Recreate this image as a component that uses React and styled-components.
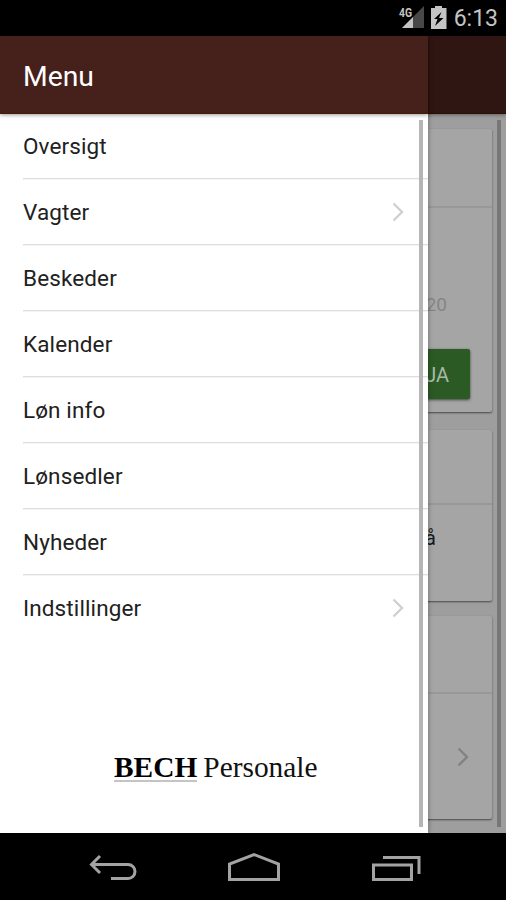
import React from 'react';
import styled, { createGlobalStyle } from 'styled-components';

const GlobalStyle = createGlobalStyle`
  * {
    box-sizing: border-box;
  }

  body {
    margin: 0;
    background: #000;
    font-family: Roboto, sans-serif;
  }
`;

const Phone = styled.div`
  display: flex;
  flex-direction: column;
  width: 506px;
  height: 900px;
  overflow: hidden;
`;

const StatusBar = styled.div`
  display: flex;
  flex: 0 0 36px;
  align-items: center;
  justify-content: flex-end;
  padding-right: 8px;
  background: #000;
  color: #c4c4c4;
`;

const StatusIcons = styled.svg`
  width: 52px;
  height: 36px;
  margin-right: 6px;
`;

const Clock = styled.span`
  height: 36px;
  padding-top: 2px;
  font-size: 23px;
  line-height: 34px;
`;

const Body = styled.div`
  position: relative;
  flex: 1;
  display: flex;
  min-height: 0;
  background: #9e9e9e;
`;

const Page = styled.div`
  flex: 1;
  display: flex;
  flex-direction: column;
`;

const AppBar = styled.header`
  flex: 0 0 78px;
  display: flex;
  align-items: center;
  padding: 5px 23px 0;
  background: ${(props) => (props.$dimmed ? '#301613' : '#46211c')};
  border-bottom: 1px solid ${(props) => (props.$dimmed ? '#2b0d03' : '#471a0c')};
  box-shadow: 0 1px 4px rgba(0, 0, 0, 0.4);
  z-index: 1;
`;

const Title = styled.h1`
  margin: 0;
  color: #fff;
  font-size: 28.3px;
  font-weight: 400;
  line-height: 36px;
`;

const Scroller = styled.div`
  flex: 1;
  display: flex;
  min-height: 0;
`;

const ScrollTrack = styled.div`
  flex: 0 0 4px;
  margin: 6px 5px 6px 0;
  background: ${(props) => (props.$dimmed ? '#777' : '#b5b5b5')};
`;

const Cards = styled.div`
  flex: 1;
  padding: 15px 5px 0 13px;
`;

const Card = styled.section`
  display: flex;
  flex-direction: column;
  height: ${(props) => props.$height}px;
  margin-bottom: ${(props) => props.$gap || 0}px;
  background: #a5a5a5;
  border-radius: 2px;
  box-shadow: 0 1px 2px rgba(0, 0, 0, 0.55);
`;

const CardHeader = styled.div`
  flex: 0 0 ${(props) => props.$height}px;
  border-bottom: 2px solid #989898;
`;

const CardBody = styled.div`
  flex: 1;
  display: flex;
  flex-direction: column;
  align-items: flex-end;
`;

const Year = styled.div`
  margin: 86px 45px 0 0;
  color: #858585;
  font-size: 19px;
  line-height: 22px;
`;

const YesButton = styled.button`
  width: 88px;
  height: 50px;
  margin: 33px 22px 0 0;
  padding: 0 21px 0 0;
  border: 0;
  border-radius: 2px;
  background: #2b5a25;
  box-shadow: 0 1px 3px rgba(0, 0, 0, 0.6);
  color: #a9b8a7;
  font: 400 20px/52px Roboto, sans-serif;
  text-align: right;
`;

const Note = styled.div`
  margin: 19px 56px 0 0;
  color: #191919;
  font-size: 20px;
  line-height: 28px;
`;

const Chevron = styled.svg`
  width: 12px;
  height: 20px;
  fill: none;
  stroke: ${(props) => (props.$dimmed ? '#828282' : '#d0d0d0')};
  stroke-width: 2.4;
`;

const CardChevron = styled.div`
  display: flex;
  margin: 53px 23px 0 0;
`;

const Drawer = styled.aside`
  position: absolute;
  top: 0;
  left: 0;
  bottom: 0;
  z-index: 2;
  display: flex;
  flex-direction: column;
  width: 428px;
  background: #fff;
  box-shadow: 0 0 5px rgba(0, 0, 0, 0.35);
`;

const DrawerContent = styled.div`
  flex: 1;
  display: flex;
  flex-direction: column;
  margin-right: -9px;
`;

const MenuList = styled.ul`
  margin: 0 0 0 23px;
  padding: 0;
  list-style: none;
`;

const MenuItem = styled.li`
  display: flex;
  align-items: center;
  justify-content: space-between;
  height: 66px;
  padding: 0 24px 2px 0;
  box-shadow: inset 0 -1px #f4f4f4, inset 0 -2px #dedede;
  color: #212121;
  font-size: 22.5px;
  letter-spacing: 0.12px;
  line-height: 64px;

  &:last-child {
    box-shadow: none;
  }
`;

const Logo = styled.div`
  display: flex;
  align-items: baseline;
  margin: 108px 0 0 114px;
  color: #111;
  font: 29.4px/34px 'Liberation Serif', serif;
`;

const LogoStrong = styled.strong`
  margin-right: 6px;
  color: #000;
  line-height: 26px;
  border-bottom: 2px solid #c4c4c4;
`;

const NavBar = styled.nav`
  flex: 0 0 67px;
  display: flex;
  align-items: center;
  justify-content: space-between;
  padding: 2px 85px 0 89px;
  background: #000;
`;

const NavIcon = styled.svg`
  height: 32px;
  fill: none;
  stroke: #a3a3a3;
  stroke-width: 3;
`;

const menu = [
  { label: 'Oversigt' },
  { label: 'Vagter', nested: true },
  { label: 'Beskeder' },
  { label: 'Kalender' },
  { label: 'Løn info' },
  { label: 'Lønsedler' },
  { label: 'Nyheder' },
  { label: 'Indstillinger', nested: true },
];

const ChevronRight = ({ dimmed }) => (
  <Chevron $dimmed={dimmed} viewBox="0 0 12 20">
    <path d="M1.500 1.500 10 10l-8.500 8.500" />
  </Chevron>
);

const App = () => {
  return (
    <Phone>
      <GlobalStyle />
      <StatusBar>
        {/* Signal strength and charging battery */}
        <StatusIcons viewBox="0 0 52 36">
          <path d="M28 6v22H6z" fill="#484848" />
          <path d="M17 17v11H6z" fill="#c4c4c4" />
          <text
            x="3"
            y="17"
            fill="#c4c4c4"
            fontFamily="Roboto, sans-serif"
            fontSize="12.5"
            fontWeight="700"
            textLength="13"
            lengthAdjust="spacingAndGlyphs"
          >
            4G
          </text>
          <path d="M39 6h7v2h4.500v21H35V8h4z" fill="#c4c4c4" />
          <path d="m45.500 12-7.500 7h3.500L39 26l8.500-8H43z" fill="#000" />
        </StatusIcons>
        <Clock>6:13</Clock>
      </StatusBar>

      <Body>
        <Page>
          <AppBar $dimmed />
          <Scroller>
            <Cards>
              <Card $height={283} $gap={18}>
                <CardHeader $height={79} />
                <CardBody>
                  <Year>20</Year>
                  <YesButton>JA</YesButton>
                </CardBody>
              </Card>
              <Card $height={171} $gap={15}>
                <CardHeader $height={75} />
                <CardBody>
                  <Note>å</Note>
                </CardBody>
              </Card>
              <Card $height={203}>
                <CardHeader $height={78} />
                <CardBody>
                  <CardChevron>
                    <ChevronRight dimmed />
                  </CardChevron>
                </CardBody>
              </Card>
            </Cards>
            <ScrollTrack $dimmed />
          </Scroller>
        </Page>

        <Drawer>
          <AppBar>
            <Title>Menu</Title>
          </AppBar>
          <Scroller>
            <DrawerContent>
              <MenuList>
                {menu.map((item) => (
                  <MenuItem key={item.label}>
                    {item.label}
                    {item.nested && <ChevronRight />}
                  </MenuItem>
                ))}
              </MenuList>
              <Logo>
                <LogoStrong>BECH</LogoStrong>
                Personale
              </Logo>
            </DrawerContent>
            <ScrollTrack />
          </Scroller>
        </Drawer>
      </Body>

      <NavBar>
        <NavIcon width="48" viewBox="0 0 48 32">
          <path d="M2 12.500h37a7 7 0 0 1 0 14H22M11 4 2.500 12.500 11 21" />
        </NavIcon>
        <NavIcon width="54" viewBox="0 0 54 32">
          <path d="M2.500 27.500V12L27 2.500 51.500 12v15.500z" />
        </NavIcon>
        <NavIcon width="50" viewBox="0 0 50 32">
          <path d="M2.500 13h38v14.500h-38zM12 5.500h36V22" />
        </NavIcon>
      </NavBar>
    </Phone>
  );
};

export default App;
